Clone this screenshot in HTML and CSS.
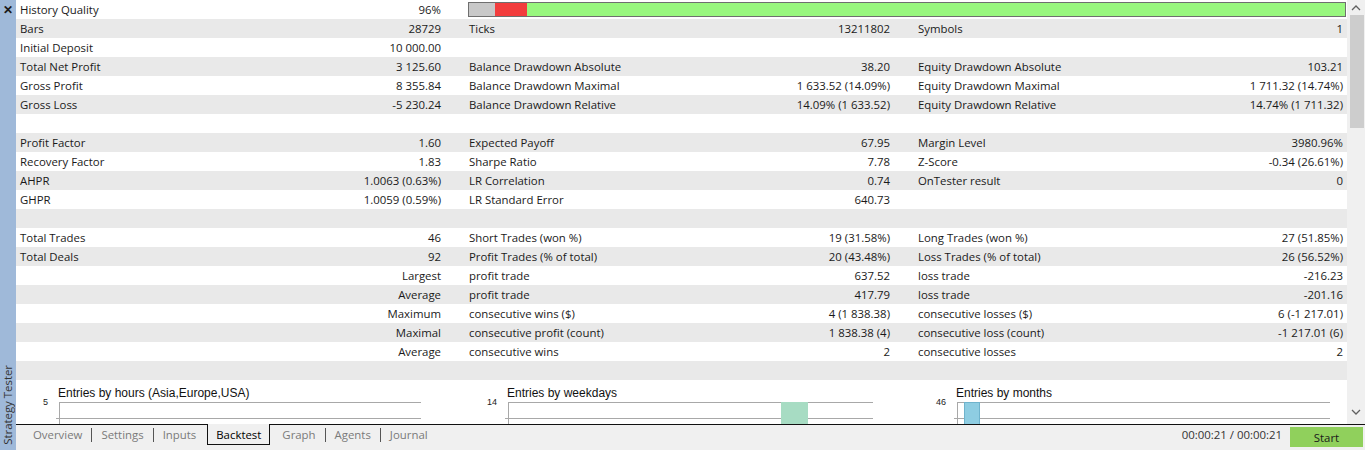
FILE: index.html
```html
<!DOCTYPE html>
<html lang="en">
<head>
    <meta charset="UTF-8">
    <title>Strategy Tester</title>
    <link rel="stylesheet" href="styles.css">
</head>
<body>
    <div class="tester">
        <div class="side">
            <span class="side-close">&#x2715;</span>
            <span class="side-title">Strategy Tester</span>
        </div>

        <div class="main">
            <div class="report-wrap">
                <div class="report">
                    <div id="reportRows"></div>

                    <div class="charts">
                        <svg class="chart" width="449" height="44">
                            <text class="chart-title" x="42" y="17">Entries by hours (Asia,Europe,USA)</text>
                            <text class="chart-num" x="32" y="25" text-anchor="end">5</text>
                            <line class="grid" x1="43" y1="22.5" x2="405" y2="22.5"/>
                            <line class="grid" x1="40" y1="38.5" x2="405" y2="38.5"/>
                            <line class="grid" x1="43.5" y1="22" x2="43.5" y2="44"/>
                        </svg>
                        <svg class="chart" width="449" height="44">
                            <text class="chart-title" x="42" y="17">Entries by weekdays</text>
                            <text class="chart-num" x="32" y="25" text-anchor="end">14</text>
                            <line class="grid" x1="43" y1="22.5" x2="408" y2="22.5"/>
                            <line class="grid" x1="40" y1="38.5" x2="408" y2="38.5"/>
                            <line class="grid" x1="43.5" y1="22" x2="43.5" y2="44"/>
                            <rect x="316" y="22" width="27" height="22" fill="#a7dcc3"/>
                        </svg>
                        <svg class="chart" width="433" height="44">
                            <text class="chart-title" x="42" y="17">Entries by months</text>
                            <text class="chart-num" x="32" y="25" text-anchor="end">46</text>
                            <line class="grid" x1="43" y1="22.5" x2="416" y2="22.5"/>
                            <line class="grid" x1="40" y1="38.5" x2="416" y2="38.5"/>
                            <line class="grid" x1="43.5" y1="22" x2="43.5" y2="44"/>
                            <rect x="50.5" y="22.5" width="15" height="22" fill="#8ecde2" stroke="#6fb3cc"/>
                        </svg>
                    </div>
                </div>

                <div class="scrollbar">
                    <svg class="arrow" width="18" height="17"><polyline points="5,10 9,6 13,10" /></svg>
                    <div class="thumb"></div>
                    <svg class="arrow arrow-down" width="18" height="17"><polyline points="5,6 9,10 13,6" /></svg>
                </div>
            </div>

            <div class="tabs">
                <span class="tab">Overview</span><span class="sep"></span>
                <span class="tab">Settings</span><span class="sep"></span>
                <span class="tab">Inputs</span>
                <span class="tab tab-active">Backtest</span>
                <span class="tab">Graph</span><span class="sep"></span>
                <span class="tab">Agents</span><span class="sep"></span>
                <span class="tab">Journal</span>

                <span class="timer">00:00:21 / 00:00:21</span>
                <button class="start">Start</button>
            </div>
        </div>
    </div>

    <script>
        // label / value pairs for the three report columns
        const rows = [
            ['Bars', '28729', 'Ticks', '13211802', 'Symbols', '1'],
            ['Initial Deposit', '10 000.00', '', '', '', ''],
            ['Total Net Profit', '3 125.60', 'Balance Drawdown Absolute', '38.20', 'Equity Drawdown Absolute', '103.21'],
            ['Gross Profit', '8 355.84', 'Balance Drawdown Maximal', '1 633.52 (14.09%)', 'Equity Drawdown Maximal', '1 711.32 (14.74%)'],
            ['Gross Loss', '-5 230.24', 'Balance Drawdown Relative', '14.09% (1 633.52)', 'Equity Drawdown Relative', '14.74% (1 711.32)'],
            [],
            ['Profit Factor', '1.60', 'Expected Payoff', '67.95', 'Margin Level', '3980.96%'],
            ['Recovery Factor', '1.83', 'Sharpe Ratio', '7.78', 'Z-Score', '-0.34 (26.61%)'],
            ['AHPR', '1.0063 (0.63%)', 'LR Correlation', '0.74', 'OnTester result', '0'],
            ['GHPR', '1.0059 (0.59%)', 'LR Standard Error', '640.73', '', ''],
            [],
            ['Total Trades', '46', 'Short Trades (won %)', '19 (31.58%)', 'Long Trades (won %)', '27 (51.85%)'],
            ['Total Deals', '92', 'Profit Trades (% of total)', '20 (43.48%)', 'Loss Trades (% of total)', '26 (56.52%)'],
            ['', 'Largest', 'profit trade', '637.52', 'loss trade', '-216.23'],
            ['', 'Average', 'profit trade', '417.79', 'loss trade', '-201.16'],
            ['', 'Maximum', 'consecutive wins ($)', '4 (1 838.38)', 'consecutive losses ($)', '6 (-1 217.01)'],
            ['', 'Maximal', 'consecutive profit (count)', '1 838.38 (4)', 'consecutive loss (count)', '-1 217.01 (6)'],
            ['', 'Average', 'consecutive wins', '2', 'consecutive losses', '2'],
            []
        ];

        renderReport();

        function cell(label, value) {
            return `<div class="cell"><span>${label || ''}</span><span>${value || ''}</span></div>`;
        }

        function renderReport() {
            const box = document.getElementById('reportRows');

            // first row holds the quality bar across columns 2 and 3
            let html = `
                <div class="row">
                    ${cell('History Quality', '96%')}
                    <div class="quality">
                        <div class="q-none"></div>
                        <div class="q-bad"></div>
                        <div class="q-good"></div>
                    </div>
                </div>
            `;

            rows.forEach(r => {
                html += `
                    <div class="row">
                        ${cell(r[0], r[1])}
                        ${cell(r[2], r[3])}
                        ${cell(r[4], r[5])}
                    </div>
                `;
            });

            box.innerHTML = html;
        }
    </script>
</body>
</html>
```

FILE: styles.css
```css
body {
    margin: 0;
    font-family: "Open Sans", sans-serif;
    font-size: 11.4px;
    color: #1a1a1a;
    background: #f0f0f0;
}
.tester {
    display: flex;
    width: 1365px;
    height: 450px;
    overflow: hidden;
}
.side {
    width: 16px;
    background: #9fb9d9;
    display: flex;
    flex-direction: column;
    justify-content: space-between;
    align-items: center;
}
.side-close {
    font-size: 12px;
    line-height: 19px;
    font-weight: bold;
    color: #1a1a1a;
}
.side-title {
    writing-mode: vertical-rl;
    transform: rotate(180deg);
    color: #333;
    padding-top: 5px;
    line-height: 16px;
}
.main {
    flex: 1;
    display: flex;
    flex-direction: column;
}
.report-wrap {
    display: flex;
    height: 424px;
}
.report {
    flex: 1;
    background: #fff;
    overflow: hidden;
}
.row {
    display: grid;
    grid-template-columns: 449px 449px 433px;
    height: 19px;
    line-height: 19px;
}
.row:nth-child(even) {
    background: #e9e9e9;
}
.cell {
    display: flex;
    justify-content: space-between;
    padding: 0 24px 0 4px;
    white-space: nowrap;
}
.cell:last-child {
    padding-right: 4px;
}
.quality {
    grid-column: 2 / 4;
    display: flex;
    margin: 2px 1px 2px 3px;
    border: 1px solid #6f6f6f;
}
.q-none {
    width: 26px;
    background: #c8c8c8;
}
.q-bad {
    width: 32px;
    background: #f23d3d;
}
.q-good {
    flex: 1;
    background: #98f77e;
}
.charts {
    display: grid;
    grid-template-columns: 449px 449px 433px;
    height: 44px;
}
.chart {
    display: block;
}
.chart-title {
    font-family: "Liberation Sans", Arial, sans-serif;
    font-size: 12px;
    fill: #111;
}
.chart-num {
    font-family: "Liberation Sans", Arial, sans-serif;
    font-size: 9px;
    fill: #222;
}
.grid {
    stroke: #a8a8a8;
    stroke-width: 1;
}
.scrollbar {
    width: 18px;
    background: #f0f0f0;
    display: flex;
    flex-direction: column;
}
.arrow polyline {
    fill: none;
    stroke: #606060;
    stroke-width: 1.3;
}
.thumb {
    height: 113px;
    margin: -2px 1px 0 3px;
    background: #cdcdcd;
}
.arrow-down {
    margin-top: auto;
    margin-bottom: 3px;
}
.tabs {
    flex: 1;
    display: flex;
    align-items: flex-start;
    border-top: 1px solid #111;
    padding-left: 8px;
}
.tab {
    padding: 0 9px;
    line-height: 19px;
    color: #7a7a7a;
}
.sep {
    width: 1px;
    height: 14px;
    margin-top: 3px;
    background: #555;
}
.tab-active {
    margin: -1px 3px 0 2px;
    padding: 1px 8px 0 8px;
    border: 1px solid #111;
    border-top: none;
    background: #f0f0f0;
    color: #000;
}
.timer {
    margin-left: auto;
    margin-right: 8px;
    line-height: 19px;
    color: #333;
}
.start {
    width: 73px;
    height: 20px;
    margin: 2px 2px 0 0;
    padding: 0;
    border: none;
    background: #90d05c;
    font-family: "Open Sans", sans-serif;
    font-size: 11.4px;
    color: #1a1a1a;
}
```
